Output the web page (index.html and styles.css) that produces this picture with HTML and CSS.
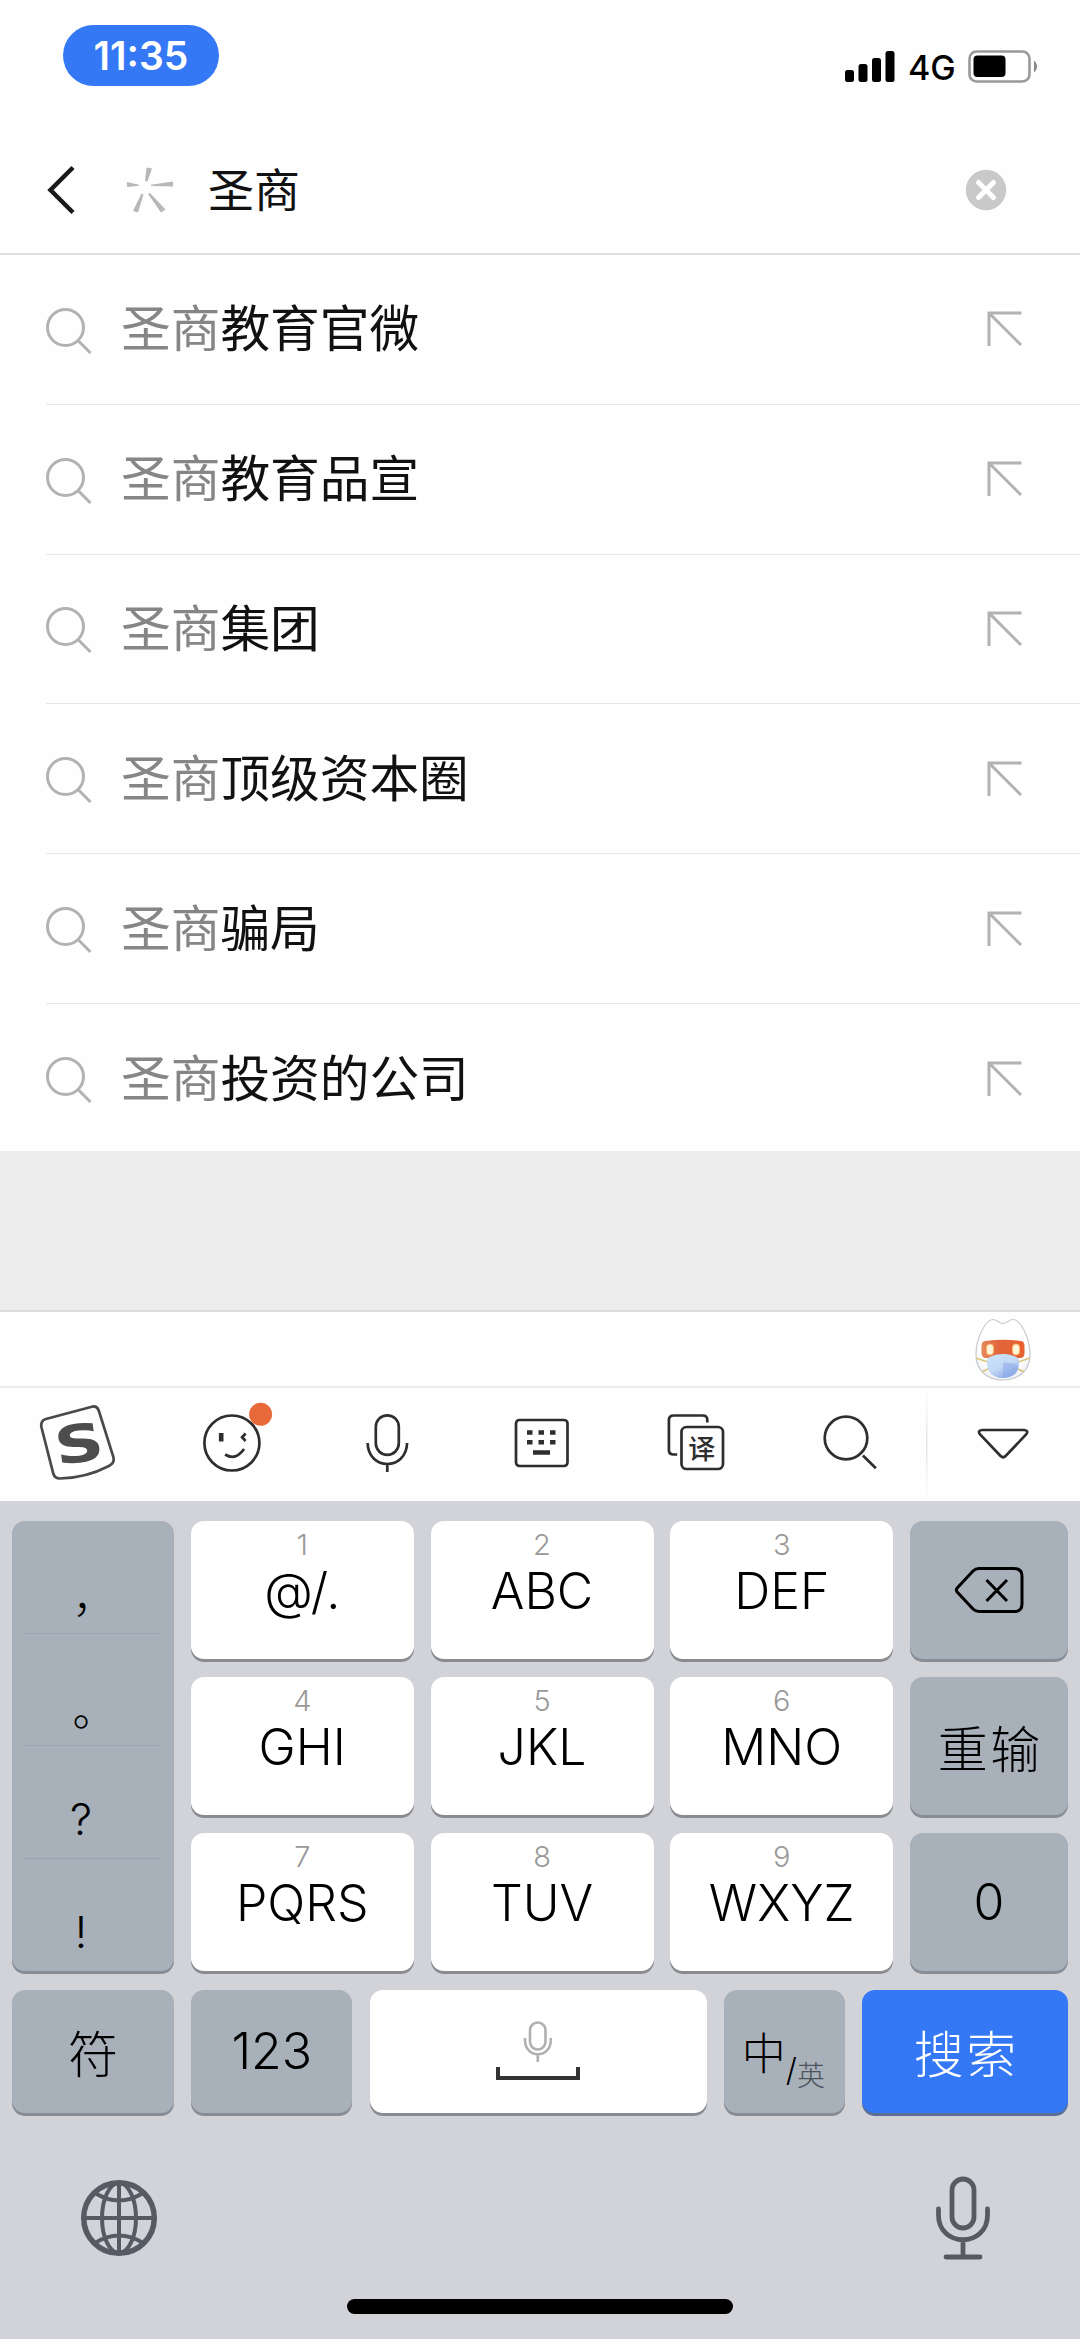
FILE: index.html
```html
<!DOCTYPE html>
<html lang="zh-CN">
<head>
<meta charset="utf-8">
<title>搜索</title>
<link rel="stylesheet" href="styles.css">
</head>
<body>
<svg class="defs" width="0" height="0" aria-hidden="true">
  <symbol id="search" viewBox="0 0 50 50"><circle cx="21.5" cy="21.5" r="18"/><path d="M34 34.5 46.5 47"/></symbol>
  <symbol id="arrow" viewBox="0 0 38 38"><path d="M35.5 3H3v33M3.500 3.500 35 35"/></symbol>
</svg>
<div class="screen">
  <header class="status">
    <span class="clock">11:35</span>
    <span class="status-right">
      <svg width="50" height="31" viewBox="0 0 50 31"><rect x="0" y="19" width="9" height="12" rx="2.500"/><rect x="13.500" y="13" width="9" height="18" rx="2.500"/><rect x="27" y="7" width="9" height="24" rx="2.500"/><rect x="40.500" y="0" width="9" height="31" rx="2.500"/></svg>
      <span class="network">4G</span>
      <svg width="71" height="33" viewBox="0 0 71 33"><rect x="1.500" y="1.500" width="60" height="30" rx="7" fill="none" stroke="#999" stroke-width="2.600"/><rect x="5.500" y="5.500" width="32" height="21.500" rx="4"/><path d="M66 10.500a7.500 7.500 0 0 1 0 12z" fill="#888"/></svg>
    </span>
  </header>

  <div class="searchbar">
    <svg class="back" width="30" height="50" viewBox="0 0 30 50"><path d="M26 2.500 3.500 25 26 47.500"/></svg>
    <svg class="spark" width="46" height="46" viewBox="0 0 46 46"><path d="M19.500 0.500 25 1.500 20.500 14.500 18 14zM0 15 0 20 12 18.800 12 17.800zM46 14.500 46 19.500 24 19 24 17.800zM14.500 26.500 16.500 27.500 11 45.500 6 44zM21 27 23 26 38.500 42.500 34 45.500z"/></svg>
    <span class="query">圣商</span>
    <svg class="clear" width="42" height="42" viewBox="0 0 42 42"><circle cx="21" cy="21" r="20.200"/><path d="M13.500 13.500 28.500 28.500M28.500 13.500 13.500 28.500"/></svg>
  </div>

  <ul class="suggestions">
    <li><svg class="find"><use href="#search"/></svg><span class="text"><i>圣商</i>教育官微</span><svg class="fill"><use href="#arrow"/></svg></li>
    <li><svg class="find"><use href="#search"/></svg><span class="text"><i>圣商</i>教育品宣</span><svg class="fill"><use href="#arrow"/></svg></li>
    <li><svg class="find"><use href="#search"/></svg><span class="text"><i>圣商</i>集团</span><svg class="fill"><use href="#arrow"/></svg></li>
    <li><svg class="find"><use href="#search"/></svg><span class="text"><i>圣商</i>顶级资本圈</span><svg class="fill"><use href="#arrow"/></svg></li>
    <li><svg class="find"><use href="#search"/></svg><span class="text"><i>圣商</i>骗局</span><svg class="fill"><use href="#arrow"/></svg></li>
    <li><svg class="find"><use href="#search"/></svg><span class="text"><i>圣商</i>投资的公司</span><svg class="fill"><use href="#arrow"/></svg></li>
  </ul>

  <div class="mascot-bar">
    <svg width="70" height="70" viewBox="0 0 70 70">
      <defs>
        <linearGradient id="visor" x1="0" y1="0" x2="1" y2="0"><stop offset="0" stop-color="#e48a5c"/><stop offset=".4" stop-color="#e2653b"/><stop offset="1" stop-color="#e8602f"/></linearGradient>
        <linearGradient id="mask" x1="0" y1="0" x2="0.600" y2="1"><stop offset="0" stop-color="#c9e6fa"/><stop offset=".6" stop-color="#c3d8f5"/><stop offset="1" stop-color="#8fabe6"/></linearGradient>
        <radialGradient id="face" cx=".5" cy=".4" r=".6"><stop offset=".75" stop-color="#fff"/><stop offset="1" stop-color="#f0f0f3"/></radialGradient>
      </defs>
      <path d="M35 8.500C39 8.500 41 4.500 45 4.500C52 4.500 62 22 62 40C62 56 50 65 35 65S8 56 8 40C8 22 18 4.500 25 4.500C29 4.500 31 8.500 35 8.500Z" fill="url(#face)" stroke="#c9c9d2" stroke-width="1.200"/>
      <path d="M17 26Q35 23.500 53 26Q56.500 26.500 56.500 31V38Q56.500 43 52 43H18Q13.500 43 13.500 38V31Q13.500 26.500 17 26Z" fill="url(#visor)"/>
      <rect x="18.500" y="29" width="7" height="11" rx="3.500" fill="#fff6d8" stroke="#ffb36b"/><rect x="44.500" y="29" width="7" height="11" rx="3.500" fill="#fff6d8" stroke="#ffb36b"/>
      <path d="M8 43 20 47M62 43 50 47M14 57 22 53M56 57 48 53" fill="none" stroke="#d9c67e" stroke-width="1.800"/>
      <path d="M35 39C42 39 51 42 51 45C52 57 46 62.500 35 63C24 62.500 18 57 19 45C19 42 28 39 35 39Z" fill="url(#mask)"/>
      <path d="M35 48C44 47 50 50 50 52C49 59 44 62.500 35 63Z" fill="#8da9e8" opacity=".55"/>
    </svg>
  </div>

  <nav class="toolbar">
    <span class="tool"><svg viewBox="37.100 1403 80 80"><path d="M46 1419 91 1407Q97 1405 99 1411L113.500 1457Q115 1463 109 1466Q86 1478 60 1478.500Q55 1478.500 53.500 1474L41.500 1427Q40.500 1420.500 46 1419Z" stroke="#4a4a4a"/><text class="logo-s" transform="translate(79 1443) rotate(-8) scale(1.310 1)" y="19">S</text></svg></span>
    <span class="tool"><svg viewBox="191.400 1403 80 80"><circle cx="232.300" cy="1443" r="27.500"/><path d="M221.600 1433V1441.500" stroke-width="4.600"/><path d="M246 1433.500 242.500 1437.300 246 1441"/><path d="M225.500 1454.500Q236 1461 244.500 1449"/><circle class="badge" cx="261" cy="1414.300" r="11.500"/></svg></span>
    <span class="tool"><svg viewBox="345.700 1403 80 80"><rect x="375.500" y="1415.300" width="23" height="39.500" rx="11.500"/><path d="M367.300 1443C368 1471 406 1471 406.800 1443M387 1464V1472"/></svg></span>
    <span class="tool"><svg viewBox="500 1403 80 80"><rect x="516" y="1420" width="51.500" height="46" rx="3.500"/><path stroke-width="4.500" d="M527 1432.500h5.500M538.500 1432.500h5.500M550 1432.500h5.500M527 1442.300h5.500M538.500 1442.300h5.500M550 1442.300h5.500M533 1452.500h17"/></svg></span>
    <span class="tool"><svg viewBox="654.300 1403 80 80"><path d="M707.600 1422.500V1420Q707.600 1415.500 703 1415.500H674Q669.200 1415.500 669.200 1420V1450Q669.200 1454.500 674 1454.500H677.500"/><rect x="681.800" y="1427" width="41.500" height="42" rx="5"/><text class="yi" x="702" y="1458.500">译</text></svg></span>
    <span class="tool"><svg viewBox="808.600 1403 80 80"><circle cx="845.600" cy="1438" r="21.300"/><path d="M862.500 1455.500 875.500 1468.300"/></svg></span>
    <span class="tool last"><svg viewBox="962.900 1403 80 80"><path d="M982 1430H1024Q1029 1430.500 1026 1434.500L1005.500 1456Q1003 1458.500 1000.500 1456L980 1434.500Q977 1430.500 982 1430Z"/></svg></span>
  </nav>

  <section class="keyboard">
    <div class="keys">
      <div class="key gray punct"><span class="comma">，</span><span class="stop">。</span><span>?</span><span>!</span></div>
      <div class="key"><small>1</small><b>@/.</b></div>
      <div class="key"><small>2</small><b>ABC</b></div>
      <div class="key"><small>3</small><b>DEF</b></div>
      <div class="key gray mid"><svg width="70" height="48" viewBox="0 0 70 48"><path d="M25 2.500H60Q68 2.500 68 10V38Q68 45.500 60 45.500H25Q21.500 45.500 19 43L3.200 26Q1.500 24 3.200 22L19 5Q21.500 2.500 25 2.500ZM32.500 14 53 35M53 14 32.500 35"/></svg></div>
      <div class="key"><small>4</small><b>GHI</b></div>
      <div class="key"><small>5</small><b>JKL</b></div>
      <div class="key"><small>6</small><b>MNO</b></div>
      <div class="key gray mid"><span class="cjk">重输</span></div>
      <div class="key"><small>7</small><b>PQRS</b></div>
      <div class="key"><small>8</small><b>TUV</b></div>
      <div class="key"><small>9</small><b>WXYZ</b></div>
      <div class="key gray mid"><b>0</b></div>
    </div>
    <div class="keys bottom">
      <div class="key gray mid"><span class="cjk">符</span></div>
      <div class="key gray mid"><b>123</b></div>
      <div class="key mid"><svg width="88" height="62" viewBox="0 0 88 62"><g fill="none" stroke="#b0b0b0" stroke-width="2.600"><rect x="36" y="2.500" width="15.500" height="27" rx="7.700"/><path d="M31 18V20C31 39 56.800 39 56.800 20V18M43.800 34V42"/></g><path d="M4 47V58H84V47" fill="none" stroke="#333" stroke-width="4"/></svg></div>
      <div class="key gray lang"><span class="zh">中</span><span class="slash">/</span><span class="en">英</span></div>
      <div class="key blue mid"><span class="cjk">搜索</span></div>
    </div>
    <div class="system">
      <svg width="78" height="78" viewBox="0 0 78 78"><circle cx="39" cy="39" r="35.300" stroke-width="5.500"/><g stroke-width="4"><path d="M39 3V75M3 39H75M15 14Q39 29 63 14M15 64Q39 49 63 64"/><ellipse cx="39" cy="39" rx="17" ry="35"/></g></svg>
      <svg width="56" height="84" viewBox="0 0 56 84"><g stroke-width="4.800" stroke-linecap="round"><rect x="17" y="3" width="22" height="49" rx="11"/><path d="M3.500 33V39C3.500 72 52.500 72 52.500 39V33M28 65V79M11 81H45"/></g></svg>
    </div>
    <div class="home"></div>
  </section>
</div>
</body>
</html>
```
FILE: styles.css
```css
* { box-sizing: border-box; }

body {
  margin: 0;
  background: #fff;
  font-family: Inter, "Noto Sans CJK SC", sans-serif;
  color: #111;
}

svg { display: block; flex: none; }
.defs { position: absolute; }

.screen {
  width: 1080px;
  height: 2339px;
  overflow: hidden;
  display: flex;
  flex-direction: column;
  background: #fefefe;
}

/* status bar */
.status {
  height: 126px;
  padding: 25px 41px 0 63px;
  display: flex;
  justify-content: space-between;
  align-items: flex-start;
}

.clock {
  width: 156px;
  height: 61px;
  border-radius: 31px;
  background: #3478f6;
  color: #fff;
  font-size: 39px;
  font-weight: 600;
  line-height: 62px;
  text-align: center;
}

.status-right {
  height: 33px;
  margin-top: 25px;
  display: flex;
  align-items: center;
  color: #000;
}

.network {
  width: 46px;
  margin: 2px 14px 0 13px;
  font-size: 34px;
  line-height: 34px;
  font-weight: 500;
}

/* search field */
.searchbar {
  height: 129px;
  padding: 0 73px 0 47px;
  display: flex;
  align-items: center;
  border-bottom: 2px solid #dfe0df;
}

.back { fill: none; stroke: #1a1a1a; stroke-width: 4.5px; }
.spark { margin-left: 50px; fill: #b8b8b8; }
.query { margin-left: 35px; font-size: 46px; line-height: 60px; }
.clear { margin-left: auto; fill: #c9c9c9; }
.clear path { stroke: #fff; stroke-width: 5px; stroke-linecap: round; }

/* suggestions */
.suggestions {
  height: 896px;
  margin: 0;
  padding: 0;
  list-style: none;
  overflow: hidden;
}

.suggestions li {
  height: 149.8px;
  margin-left: 46px;
  padding: 0 56px 0 0;
  display: flex;
  align-items: center;
  border-bottom: 1.5px solid #e6e6e6;
}

.suggestions li:last-child { border-bottom: 0; }
.find { width: 50px; height: 50px; margin: 3px 0 0 -2px; fill: none; stroke: #b2b2b2; stroke-width: 3px; }
.fill { width: 38px; height: 38px; margin-left: auto; fill: none; stroke: #b2b2b2; stroke-width: 3px; }
.text { margin-left: 27px; font-size: 49.7px; line-height: 70px; }
.text i { font-style: normal; color: #868686; }

/* candidate strip */
.mascot-bar {
  height: 237px;
  padding: 164px 42px 0 0;
  display: flex;
  justify-content: flex-end;
  background: linear-gradient(#ededed 159px, #d9d9d9 159px, #dedede 161px, #fefefe 161px);
  border-bottom: 2px solid #ebebeb;
}

/* tool row */
.toolbar {
  height: 113px;
  display: grid;
  grid-template-columns: repeat(7, 1fr);
}

.tool { display: flex; justify-content: center; padding-top: 15px; }
.tool svg { width: 80px; height: 80px; overflow: visible; fill: none; stroke: #2e2e2e; stroke-width: 2.7px; stroke-linecap: butt; }
.tool .badge { fill: #e8693a; stroke: none; }
.tool text { stroke: none; text-anchor: middle; }
.logo-s { font: 700 52px "DejaVu Sans", sans-serif; fill: #4d4d4d; }
.yi { font: 500 27px "Noto Sans CJK SC", sans-serif; fill: #2e2e2e; }
.last {
  background: linear-gradient(#fefefe, #e4e4e4 50%, #fefefe) left / 1.5px 100% no-repeat;
}

/* keyboard */
.keyboard {
  flex: 1;
  background: #d2d3d8;
  padding: 20px 12px 0;
}

.keys {
  display: grid;
  grid-template-columns: 162px repeat(3, 223px) 158px;
  grid-template-rows: repeat(3, 138px);
  column-gap: 16.75px;
  row-gap: 18px;
}

.keys.bottom {
  margin-top: 18.5px;
  grid-template-columns: 162px 161px 337px 121px 206px;
  grid-template-rows: 123.5px;
  column-gap: 17.25px;
}

.key {
  border-radius: 13px;
  background: #fff;
  box-shadow: 0 3px 0 #898b90;
  color: #000;
  text-align: center;
  display: flex;
  flex-direction: column;
  align-items: center;
}

.gray { background: #a8b0ba; box-shadow: 0 3px 0 #878c95; }
.blue { background: #3478f6; box-shadow: 0 3px 0 #5b6e96; color: #fff; }
.mid { justify-content: center; }
.key svg { fill: none; stroke: #000; stroke-width: 3px; }
.key small { margin-top: 8px; font-size: 29px; line-height: 32px; font-weight: 300; color: #999; }
.key b { font-size: 50px; line-height: 60px; font-weight: 300; }
.cjk { font-size: 50px; letter-spacing: 2.5px; margin-right: -2.5px; font-weight: 300; line-height: 64px; font-family: "Noto Sans CJK SC", sans-serif; }

.punct { grid-row: span 3; padding: 0 12px; align-items: stretch; }
.punct span {
  height: 116px;
  padding: 45px 24px 0 0;
  border-bottom: 1.5px solid #9fa3b0;
  font-size: 44px;
  line-height: 56px;
  font-weight: 300;
}
.punct span:last-child { border-bottom: 0; }
.punct .comma, .punct .stop { padding-left: 27px; font-family: "Noto Sans CJK SC", sans-serif; }

.lang { flex-direction: row; align-items: flex-start; padding-left: 18px; font-family: "Noto Sans CJK SC", sans-serif; font-weight: 300; }
.zh { font-size: 44px; line-height: 60px; margin-top: 31px; }
.slash { margin-top: 60px; font-size: 32px; line-height: 40px; font-family: Inter, sans-serif; }
.en { margin-top: 64px; font-size: 28px; line-height: 40px; color: #4c535b; }

.system {
  height: 186px;
  padding: 66px 77px 0 68px;
  display: flex;
  justify-content: space-between;
}

.system svg { fill: none; stroke: #565a63; }
.system svg:last-child { margin-top: -3px; }

.home { width: 386px; height: 15px; margin: 0 auto; border-radius: 8px; background: #000; }
```
